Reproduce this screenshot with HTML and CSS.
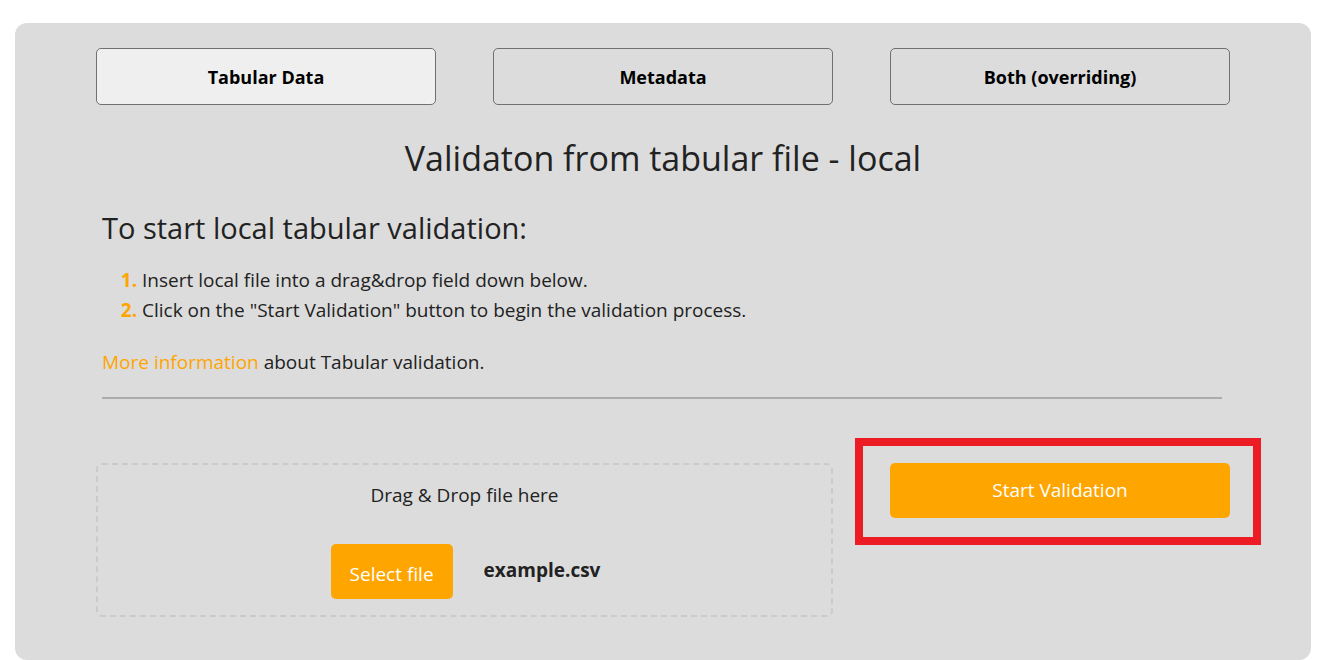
FILE: index.html
```html
<!DOCTYPE html>
<html lang="en">
<head>
<meta charset="utf-8">
<title>Tabular validation</title>
<link rel="stylesheet" href="styles.css">
</head>
<body>
<main class="panel">
  <nav class="tabs">
    <button class="tab active">Tabular Data</button>
    <button class="tab">Metadata</button>
    <button class="tab">Both (overriding)</button>
  </nav>
  <section class="intro">
    <h2 class="title">Validaton from tabular file - local</h2>
    <h3 class="subtitle">To start local tabular validation:</h3>
    <ol class="steps">
      <li>Insert local file into a drag&amp;drop field down below.</li>
      <li>Click on the "Start Validation" button to begin the validation process.</li>
    </ol>
    <p class="more"><a href="#" class="link">More information</a> about Tabular validation.</p>
    <hr class="divider">
  </section>
  <section class="actions">
    <div class="dropzone">
      <p class="drop-label">Drag &amp; Drop file here</p>
      <div class="file-row">
        <button class="btn select">Select file</button>
        <span class="filename">example.csv</span>
      </div>
    </div>
    <div class="start-cell">
      <button class="btn start">Start Validation</button>
      <div class="highlight"></div>
    </div>
  </section>
</main>
</body>
</html>
```
FILE: styles.css
```css
* { box-sizing: border-box; }
html, body { margin: 0; padding: 0; background: #fff; }
body {
  font-family: "Open Sans", "Noto Sans", sans-serif;
  color: #222;
  padding: 23px 10px 0 15px;
  overflow: hidden;
  height: 660px;
}
.panel {
  background: #dcdcdc;
  border-radius: 12px;
  padding: 25px 81px 0 81px;
  width: 1296px;
  height: 637px;
}
.tabs {
  display: grid;
  grid-template-columns: repeat(3, 340px);
  justify-content: space-between;
  width: 1134px;
}
.tab {
  height: 57px;
  border: 1px solid #707070;
  border-radius: 5px;
  background: transparent;
  font-family: inherit;
  font-weight: 700;
  font-size: 18px;
  color: #000;
  padding-top: 2px;
}
.tab.active { background: #efefef; }
.intro { padding: 0 6px; }
.title {
  text-align: center;
  font-size: 34px;
  font-weight: 400;
  margin: 31px 0 0;
  line-height: 44px;
  color: #222;
}
.subtitle {
  font-size: 29px;
  font-weight: 500;
  margin: 28px 0 0;
  line-height: 40px;
  color: #222;
}
.steps {
  margin: 17px 0 0;
  padding-left: 40px;
  font-size: 19px;
  line-height: 30px;
}
.steps li::marker { color: #ffa500; font-weight: 700; }
.more { margin: 22px 0 0; font-size: 19px; line-height: 30px; }
.link { color: #ffa500; text-decoration: none; }
.divider {
  margin: 20px 0 0;
  border: none;
  border-top: 2px solid #ababab;
  width: 1120px;
}
.actions {
  display: grid;
  grid-template-columns: 737px 340px;
  justify-content: space-between;
  width: 1134px;
  margin-top: 64px;
}
.dropzone {
  border: 2px dashed #cbcbcb;
  border-radius: 6px;
  height: 154px;
  display: flex;
  flex-direction: column;
  align-items: center;
  padding-top: 15px;
}
.drop-label { margin: 0; font-size: 19px; line-height: 30px; }
.file-row {
  display: flex;
  align-items: center;
  gap: 31px;
  margin-top: 34px;
  margin-left: 2px;
}
.btn {
  border: none;
  border-radius: 5px;
  background: #ffa500;
  color: #fff;
  font-family: inherit;
  font-size: 19px;
}
.select { width: 122px; height: 55px; padding: 4px 0 0; }
.filename { font-weight: 700; font-size: 19px; color: #222; margin-top: -4px; }
.start-cell { position: relative; }
.start { width: 340px; height: 55px; padding: 0 0 2px; }
.highlight {
  position: absolute;
  left: -35px;
  top: -25px;
  width: 406px;
  height: 107px;
  border: 8px solid #ed1c24;
  pointer-events: none;
}
```
